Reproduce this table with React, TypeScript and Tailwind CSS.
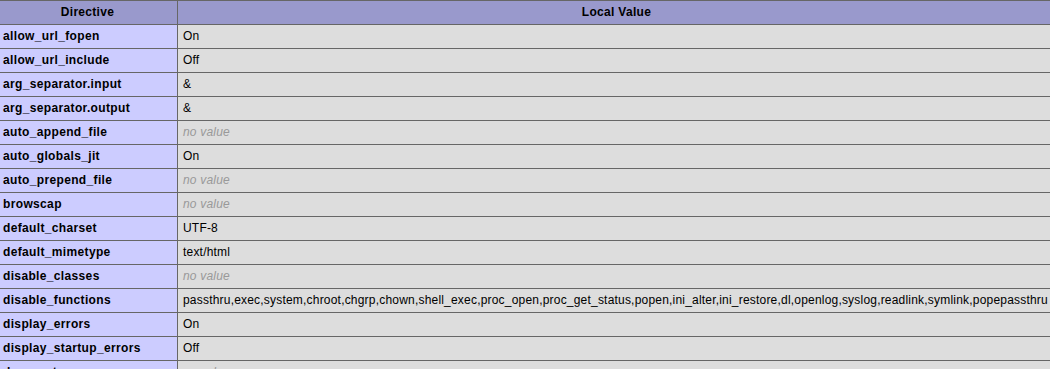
import React from 'react';

interface Directive {
    name: string;
    value: string | null;
}

// php ini directives, local value only
const directives: Directive[] = [
    { name: 'allow_url_fopen', value: 'On' },
    { name: 'allow_url_include', value: 'Off' },
    { name: 'arg_separator.input', value: '&' },
    { name: 'arg_separator.output', value: '&' },
    { name: 'auto_append_file', value: null },
    { name: 'auto_globals_jit', value: 'On' },
    { name: 'auto_prepend_file', value: null },
    { name: 'browscap', value: null },
    { name: 'default_charset', value: 'UTF-8' },
    { name: 'default_mimetype', value: 'text/html' },
    { name: 'disable_classes', value: null },
    {
        name: 'disable_functions',
        value: 'passthru,exec,system,chroot,chgrp,chown,shell_exec,proc_open,proc_get_status,popen,ini_alter,ini_restore,dl,openlog,syslog,readlink,symlink,popepassthru',
    },
    { name: 'display_errors', value: 'On' },
    { name: 'display_startup_errors', value: 'Off' },
    { name: 'doc_root', value: null },
    { name: 'docref_ext', value: null },
];

const cell = 'border border-[#666666] px-[5px] py-[4px] text-[12px] leading-[15px] text-black';

const App = () => {
    return (
        <div className="w-[1050px] h-[369px] overflow-hidden bg-white font-['Liberation_Sans',Arial,sans-serif]">
            <table className="table-fixed border-collapse -ml-[3px] w-[1059px]">
                <colgroup>
                    <col className="w-[180px]" />
                    <col />
                </colgroup>
                <thead>
                    <tr className="bg-[#9999cc]">
                        <th className={cell + ' font-bold text-center tracking-[0.3px]'}>Directive</th>
                        <th className={cell + ' font-bold text-center tracking-[0.3px]'}>Local Value</th>
                    </tr>
                </thead>
                <tbody>
                    {directives.map((item) => (
                        <tr key={item.name}>
                            <td className={cell + ' bg-[#ccccff] font-bold text-left tracking-[0.35px]'}>{item.name}</td>
                            <td className={cell + ' bg-[#dddddd] text-left whitespace-nowrap tracking-[0.2px]'}>
                                {item.value === null ? (
                                    <i className="text-[#999999]">no value</i>
                                ) : (
                                    item.value
                                )}
                            </td>
                        </tr>
                    ))}
                </tbody>
            </table>
        </div>
    );
};

export default App;
